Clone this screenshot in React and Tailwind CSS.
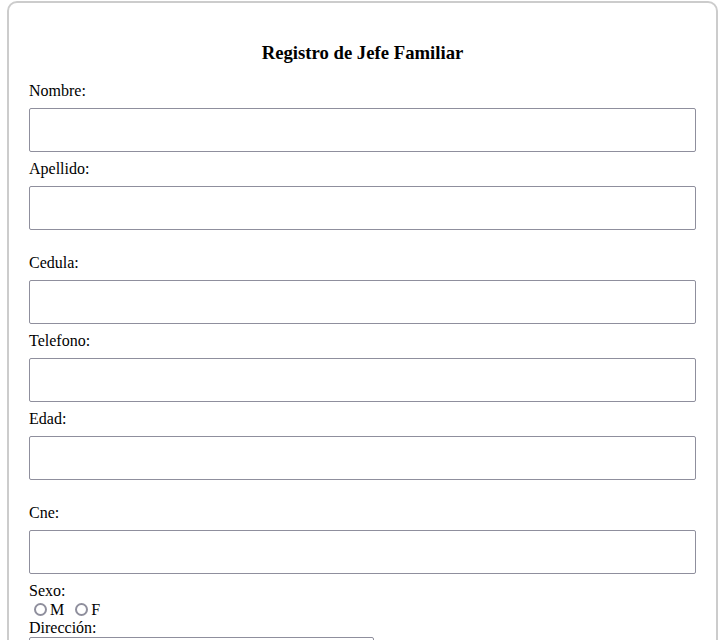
export default function App() {
  const font = { fontFamily: '"Liberation Serif", "Times New Roman", serif' };
  const Field = ({ label, extra }) => (
    <>
      <div className={"leading-[18px] text-[16px] text-black " + (extra ? "mt-4" : "")}>{label}</div>
      <div className="my-2 h-[44px] w-full rounded-[2px] border border-[#8f8f9d] bg-white" />
    </>
  );
  const Radio = ({ label, ml }) => (
    <span className={"inline-flex items-center " + ml}>
      <span className="inline-block h-[13px] w-[13px] rounded-full border-2 border-[#8f8f9d] bg-white" />
      <span className="ml-[3px]">{label}</span>
    </span>
  );
  return (
    <div className="min-h-[640px] bg-white pt-px" style={font}>
      <div className="ml-[7px] mr-[9px] flex flex-col rounded-[10px] border-2 border-[#cccccc] bg-white px-5 pt-5 pb-5">
        <div className="my-[19px] text-center text-[18.72px] font-bold leading-[21px] text-black">
          Registro de Jefe Familiar
        </div>
        <Field label="Nombre:" />
        <Field label="Apellido:" />
        <Field label="Cedula:" extra />
        <Field label="Telefono:" />
        <Field label="Edad:" />
        <Field label="Cne:" extra />
        <div className="leading-[18px] text-[16px] text-black">Sexo:</div>
        <div className="flex h-[19px] items-center text-[16px] leading-[18px] text-black">
          <Radio label="M" ml="ml-[5px]" />
          <Radio label="F" ml="ml-[11px]" />
        </div>
        <div className="leading-[18px] text-[16px] text-black">Dirección:</div>
        <div className="h-[40px] w-[345px] rounded-[2px] border border-[#8f8f9d] bg-white" />
      </div>
    </div>
  );
}
